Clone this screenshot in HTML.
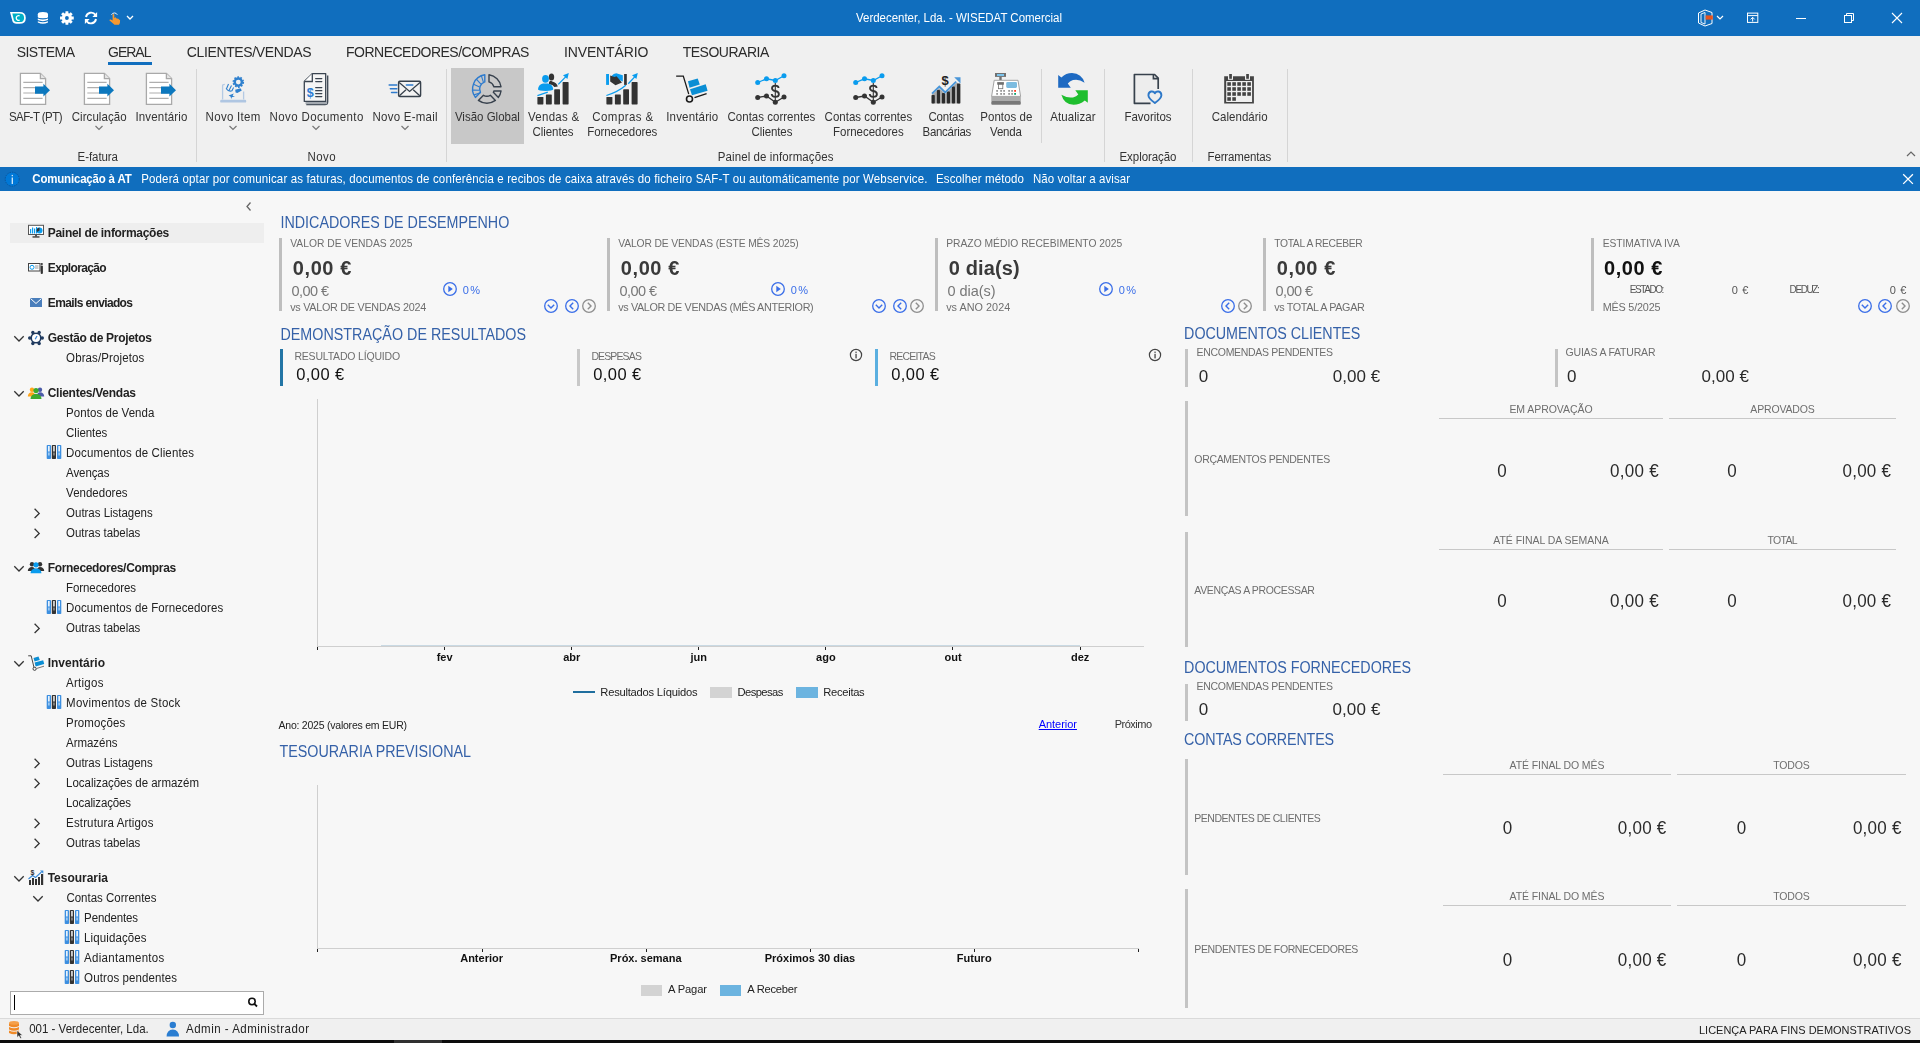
<!DOCTYPE html>
<html><head><meta charset="utf-8"><title>WISEDAT Comercial</title>
<style>
html,body{margin:0;padding:0;}
body{width:1920px;height:1043px;position:relative;overflow:hidden;background:#F7F7F7;font-family:"Liberation Sans", sans-serif;}
.t{position:absolute;white-space:pre;line-height:1;}
svg{overflow:visible}
</style></head><body>
<div style="position:absolute;left:0px;top:0px;width:1920px;height:36px;background:#106EBE;"></div><div style="position:absolute;left:0px;top:36px;width:1920px;height:131px;background:#F0F0F0;"></div><div style="position:absolute;left:0px;top:167px;width:1920px;height:24px;background:#106EBE;"></div><div style="position:absolute;left:0px;top:1018px;width:1920px;height:1px;background:#DADADA;"></div><div style="position:absolute;left:0px;top:1019px;width:1920px;height:21px;background:#F0F0F0;"></div><div style="position:absolute;left:0px;top:1040px;width:1920px;height:3px;background:#0C0C0C;"></div><div style="position:absolute;left:394px;top:1040px;width:48px;height:3px;background:#303030;"></div><div style="position:absolute;left:108px;top:62px;width:44px;height:3px;background:#106EBE;"></div><div style="position:absolute;left:196px;top:69px;width:1px;height:93px;background:#D5D5D5;"></div><div style="position:absolute;left:446px;top:69px;width:1px;height:93px;background:#D5D5D5;"></div><div style="position:absolute;left:1104px;top:69px;width:1px;height:93px;background:#D5D5D5;"></div><div style="position:absolute;left:1192px;top:69px;width:1px;height:93px;background:#D5D5D5;"></div><div style="position:absolute;left:1287px;top:69px;width:1px;height:93px;background:#D5D5D5;"></div><div style="position:absolute;left:1041px;top:69px;width:1px;height:74px;background:#D5D5D5;"></div><div style="position:absolute;left:451px;top:68px;width:73px;height:76px;background:#C8C8C8;"></div><div style="position:absolute;left:10px;top:223px;width:254px;height:20px;background:#EEEEEE;"></div><div style="position:absolute;left:10px;top:991px;width:254px;height:24px;background:#fff;box-sizing:border-box;border:1px solid #ABABAB;"></div><div style="position:absolute;left:14px;top:995px;width:1px;height:15px;background:#000;"></div><div style="position:absolute;left:279px;top:238px;width:3px;height:73px;background:#BEBEBE;"></div><div style="position:absolute;left:607px;top:238px;width:3px;height:73px;background:#BEBEBE;"></div><div style="position:absolute;left:935px;top:238px;width:3px;height:73px;background:#BEBEBE;"></div><div style="position:absolute;left:1263px;top:238px;width:3px;height:73px;background:#BEBEBE;"></div><div style="position:absolute;left:1591px;top:238px;width:3px;height:73px;background:#BEBEBE;"></div><div style="position:absolute;left:280px;top:349px;width:3px;height:37px;background:#2375A5;"></div><div style="position:absolute;left:577px;top:349px;width:3px;height:37px;background:#C8C8C8;"></div><div style="position:absolute;left:875px;top:349px;width:3px;height:37px;background:#5AAFE0;"></div><div style="position:absolute;left:317px;top:399px;width:1px;height:248px;background:#CFCFCF;"></div><div style="position:absolute;left:317px;top:646px;width:827px;height:1px;background:#CFCFCF;"></div><div style="position:absolute;left:381px;top:645px;width:699px;height:1px;background:#C9D9E3;"></div><div style="position:absolute;left:317px;top:647px;width:1px;height:3px;background:#222;"></div><div style="position:absolute;left:444px;top:647px;width:1px;height:3px;background:#222;"></div><div style="position:absolute;left:571px;top:647px;width:1px;height:3px;background:#222;"></div><div style="position:absolute;left:698px;top:647px;width:1px;height:3px;background:#222;"></div><div style="position:absolute;left:825px;top:647px;width:1px;height:3px;background:#222;"></div><div style="position:absolute;left:952px;top:647px;width:1px;height:3px;background:#222;"></div><div style="position:absolute;left:1080px;top:647px;width:1px;height:3px;background:#222;"></div><div style="position:absolute;left:573px;top:691px;width:22px;height:2px;background:#1F6E9E;"></div><div style="position:absolute;left:710px;top:687px;width:22px;height:11px;background:#D3D3D3;"></div><div style="position:absolute;left:796px;top:687px;width:22px;height:11px;background:#6CB4E0;"></div><div style="position:absolute;left:317px;top:785px;width:1px;height:164px;background:#CFCFCF;"></div><div style="position:absolute;left:317px;top:948px;width:822px;height:1px;background:#CFCFCF;"></div><div style="position:absolute;left:317px;top:949px;width:1px;height:3px;background:#222;"></div><div style="position:absolute;left:482px;top:949px;width:1px;height:3px;background:#222;"></div><div style="position:absolute;left:646px;top:949px;width:1px;height:3px;background:#222;"></div><div style="position:absolute;left:810px;top:949px;width:1px;height:3px;background:#222;"></div><div style="position:absolute;left:974px;top:949px;width:1px;height:3px;background:#222;"></div><div style="position:absolute;left:1138px;top:949px;width:1px;height:3px;background:#222;"></div><div style="position:absolute;left:641px;top:985px;width:21px;height:11px;background:#D3D3D3;"></div><div style="position:absolute;left:720px;top:985px;width:21px;height:11px;background:#6CB4E0;"></div><div style="position:absolute;left:1185px;top:349px;width:3px;height:38px;background:#C4C4C4;"></div><div style="position:absolute;left:1555px;top:349px;width:3px;height:38px;background:#C4C4C4;"></div><div style="position:absolute;left:1185px;top:401px;width:3px;height:115px;background:#C4C4C4;"></div><div style="position:absolute;left:1439px;top:418px;width:224px;height:1px;background:#C8C8C8;"></div><div style="position:absolute;left:1669px;top:418px;width:227px;height:1px;background:#C8C8C8;"></div><div style="position:absolute;left:1185px;top:532px;width:3px;height:115px;background:#C4C4C4;"></div><div style="position:absolute;left:1439px;top:549px;width:224px;height:1px;background:#C8C8C8;"></div><div style="position:absolute;left:1669px;top:549px;width:227px;height:1px;background:#C8C8C8;"></div><div style="position:absolute;left:1185px;top:684px;width:3px;height:37px;background:#C4C4C4;"></div><div style="position:absolute;left:1185px;top:759px;width:3px;height:116px;background:#C4C4C4;"></div><div style="position:absolute;left:1443px;top:774px;width:228px;height:1px;background:#C8C8C8;"></div><div style="position:absolute;left:1677px;top:774px;width:229px;height:1px;background:#C8C8C8;"></div><div style="position:absolute;left:1185px;top:889px;width:3px;height:119px;background:#C4C4C4;"></div><div style="position:absolute;left:1443px;top:905px;width:228px;height:1px;background:#C8C8C8;"></div><div style="position:absolute;left:1677px;top:905px;width:229px;height:1px;background:#C8C8C8;"></div>
<svg style="position:absolute;left:94px;top:124px" width="10" height="8" viewBox="0 0 10 8"><path d="M1.5,2 L5,5.5 L8.5,2" stroke="#777" stroke-width="1.2" fill="none"/></svg><svg style="position:absolute;left:228px;top:124px" width="10" height="8" viewBox="0 0 10 8"><path d="M1.5,2 L5,5.5 L8.5,2" stroke="#777" stroke-width="1.2" fill="none"/></svg><svg style="position:absolute;left:311px;top:124px" width="10" height="8" viewBox="0 0 10 8"><path d="M1.5,2 L5,5.5 L8.5,2" stroke="#777" stroke-width="1.2" fill="none"/></svg><svg style="position:absolute;left:400px;top:124px" width="10" height="8" viewBox="0 0 10 8"><path d="M1.5,2 L5,5.5 L8.5,2" stroke="#777" stroke-width="1.2" fill="none"/></svg><svg style="position:absolute;left:0px;top:0px" width="140" height="36" viewBox="0 0 140 36">
<path d="M10,12 H19.5 Q25.8,12 25.8,17.9 Q25.8,23.8 19.5,23.8 H16.5 Q13.2,23.8 12.4,21 Z" fill="#fff"/>
<path d="M12.3,13.6 H19.5 Q24.1,13.6 24.1,17.9 Q24.1,22.1 19.5,22.1 H16.6 Q14.4,22.1 13.9,20.3 Z" fill="#00AFC6"/>
<path d="M19.6,15.8 A2.4,2.4 0 1 0 19.6,20.2" stroke="#fff" stroke-width="1.3" fill="none"/>
<ellipse cx="42.9" cy="14.4" rx="5.1" ry="2.4" fill="#fff"/>
<rect x="37.8" y="14.4" width="10.2" height="2.6" fill="#fff"/>
<ellipse cx="42.9" cy="17" rx="5.1" ry="1.2" fill="#fff"/>
<path d="M37.8,18.5 Q42.9,20.6 48,18.5 V20.1 Q42.9,22.3 37.8,20.1 Z" fill="#fff"/>
<path d="M37.8,21.3 Q42.9,23.4 48,21.3 V22.6 Q42.9,25.1 37.8,22.6 Z" fill="#fff"/>
<path d="M71.77,16.49 L73.76,16.61 L73.76,19.39 L71.77,19.51 L71.41,20.38 L72.73,21.87 L70.77,23.83 L69.28,22.51 L68.41,22.87 L68.29,24.86 L65.51,24.86 L65.39,22.87 L64.52,22.51 L63.03,23.83 L61.07,21.87 L62.39,20.38 L62.03,19.51 L60.04,19.39 L60.04,16.61 L62.03,16.49 L62.39,15.62 L61.07,14.13 L63.03,12.17 L64.52,13.49 L65.39,13.13 L65.51,11.14 L68.29,11.14 L68.41,13.13 L69.28,13.49 L70.77,12.17 L72.73,14.13 L71.41,15.62 Z" fill="#fff"/><circle cx="66.9" cy="18" r="1.9" fill="#106EBE"/>
<path d="M86,17 A5.2,5.2 0 0 1 95.5,15" stroke="#fff" stroke-width="1.9" fill="none"/>
<path d="M97.1,12 V17 H92.4 Z" fill="#fff"/>
<path d="M96,19 A5.2,5.2 0 0 1 86.5,21" stroke="#fff" stroke-width="1.9" fill="none"/>
<path d="M84.9,24 V19 H89.6 Z" fill="#fff"/>
<path d="M111.5,14.8 A3.2,3.2 0 0 1 117.3,14.8" stroke="#fff" stroke-width="0.9" fill="none"/>
<path d="M112.6,14.6 Q113.4,13.4 114.3,14.6 V18 L115.2,17.4 Q116,17.2 116.1,18 V18.4 Q117,17.8 117.6,18.6 V19 Q118.6,18.6 119,19.4 L120.1,20.2 Q120.3,23 119,24.8 H114.5 L109.3,20.2 Q109.6,19.2 110.8,19.6 L112.6,20.6 Z" fill="#F7982F"/>
<path d="M127,16 L130,19 L133,16" stroke="#fff" stroke-width="1.3" fill="none"/>
</svg><svg style="position:absolute;left:0px;top:0px" width="1920" height="36" viewBox="0 0 1920 36">
<path d="M1698.5,13 L1705,10 L1712,12.5 V23.5 L1705,26 L1698.5,23 Z" fill="none" stroke="#fff" stroke-width="1"/>
<path d="M1701,14 L1705,12.5 V24 L1701,22.5 Z" fill="none" stroke="#fff" stroke-width="0.9"/>
<rect x="1705.6" y="15.4" width="7.2" height="4.2" fill="#E8541E"/>
<path d="M1717,16 L1720,19 L1723,16" stroke="#fff" stroke-width="1.2" fill="none"/>
<rect x="1747.5" y="13.1" width="10.3" height="9.3" fill="none" stroke="#fff" stroke-width="1"/>
<path d="M1747.5,15.6 H1757.8 M1752.65,21.5 V17.3 M1750.6,19.4 L1752.65,17.3 L1754.7,19.4" stroke="#fff" stroke-width="1" fill="none"/>
<path d="M1796,18.5 H1806" stroke="#fff" stroke-width="1"/>
<rect x="1844.5" y="15.5" width="7" height="7" fill="none" stroke="#fff" stroke-width="1"/>
<path d="M1846.5,15.5 V13.5 H1853.5 V20.5 H1851.5" stroke="#fff" stroke-width="1" fill="none"/>
<path d="M1892,13 L1902,23 M1902,13 L1892,23" stroke="#fff" stroke-width="1.1"/>
</svg><svg style="position:absolute;left:14px;top:68px" width="42" height="42" viewBox="0 0 42 42">
<path d="M6.4,5.4 H26.4 L31.6,10.6 V36.4 H6.4 Z" fill="#fff" stroke="#A9A9A9" stroke-width="1.3"/>
<path d="M26.4,5.4 V10.6 H31.6" fill="#E6E6E6" stroke="#A9A9A9" stroke-width="1.3"/>
<path d="M9.3,14.3 H28.6 M9.3,19.6 H28.6 M9.3,25 H28.6 M9.3,30.3 H28.6" stroke="#AEAEAE" stroke-width="1.2"/>
<path d="M21,18.6 H29.4 V15.8 L36,22.2 L29.4,28.6 V25.8 H21 Z" fill="#0C78BE"/></svg><svg style="position:absolute;left:77.8px;top:68px" width="42" height="42" viewBox="0 0 42 42">
<path d="M6.4,5.4 H26.4 L31.6,10.6 V36.4 H6.4 Z" fill="#fff" stroke="#A9A9A9" stroke-width="1.3"/>
<path d="M26.4,5.4 V10.6 H31.6" fill="#E6E6E6" stroke="#A9A9A9" stroke-width="1.3"/>
<path d="M9.3,14.3 H28.6 M9.3,19.6 H28.6 M9.3,25 H28.6 M9.3,30.3 H28.6" stroke="#AEAEAE" stroke-width="1.2"/>
<path d="M21,18.6 H29.4 V15.8 L36,22.2 L29.4,28.6 V25.8 H21 Z" fill="#0C78BE"/></svg><svg style="position:absolute;left:139.7px;top:68px" width="42" height="42" viewBox="0 0 42 42">
<path d="M6.4,5.4 H26.4 L31.6,10.6 V36.4 H6.4 Z" fill="#fff" stroke="#A9A9A9" stroke-width="1.3"/>
<path d="M26.4,5.4 V10.6 H31.6" fill="#E6E6E6" stroke="#A9A9A9" stroke-width="1.3"/>
<path d="M9.3,14.3 H28.6 M9.3,19.6 H28.6 M9.3,25 H28.6 M9.3,30.3 H28.6" stroke="#AEAEAE" stroke-width="1.2"/>
<path d="M21,18.6 H29.4 V15.8 L36,22.2 L29.4,28.6 V25.8 H21 Z" fill="#0C78BE"/></svg><svg style="position:absolute;left:214px;top:68px" width="42" height="42" viewBox="0 0 42 42">
<path d="M8.6,31.5 V17.6 Q8.6,16.4 10.8,16.4" stroke="#B4CAE4" stroke-width="1.3" fill="none"/>
<path d="M29.6,23.5 V31.5" stroke="#B4CAE4" stroke-width="1.3"/>
<rect x="6.2" y="31.8" width="26" height="2.8" rx="1.2" fill="#AFC6E2"/>
<circle cx="24.3" cy="14.1" r="3.6" fill="none" stroke="#2F80CE" stroke-width="2.4"/>
<circle cx="24.3" cy="14.1" r="5" fill="none" stroke="#2F80CE" stroke-width="1.6" stroke-dasharray="1.6 1.54"/>
<path d="M21.2,21.8 L26.5,20.2 L27.8,22.4 L23.3,25 L21.6,24.6 Z" fill="#2F80CE"/>
<path d="M12.3,21.3 L14.5,16 M15,22.5 L17.5,17.5 M17.8,23 L19.6,19.5 M12,20.5 Q15,24.5 18.5,22.5" stroke="#2F80CE" stroke-width="1.1" fill="none"/>
<path d="M14.6,27.6 L19.8,25.5 L18.6,27.8 L21,28.5 L17.8,29.2 L17.3,31 L16.5,28.6 Z" fill="#2F80CE"/></svg><svg style="position:absolute;left:296px;top:68px" width="42" height="42" viewBox="0 0 42 42">
<path d="M31.7,7.6 V33.8 Q31.7,36.7 29,36.7 H10.3" fill="none" stroke="#3A4450" stroke-width="1.3"/>
<rect x="9.5" y="33.6" width="21.6" height="2.6" fill="#A3A9B0"/>
<path d="M16.3,5.6 H29.7 V33.4 H8.3 V13.5 Z" fill="#F5F5F5" stroke="#3A4450" stroke-width="1.3" stroke-linejoin="round"/>
<path d="M16.3,5.6 V13.5 H8.3" fill="#fff" stroke="#3A4450" stroke-width="1.3"/>
<path d="M19.7,10.6 H25.8 M19.7,13.6 H25.8 M19.7,19.6 H25.8 M19.7,22.7 H25.8 M19.7,25.6 H25.8 M19.7,28.6 H25.8" stroke="#3A4450" stroke-width="1.3" stroke-linecap="round"/>
<text x="14.2" y="28.6" font-family="Liberation Sans" font-weight="bold" font-size="12.5" fill="#2B7CD3" text-anchor="middle">$</text></svg><svg style="position:absolute;left:384px;top:68px" width="42" height="42" viewBox="0 0 42 42">
<rect x="14.6" y="13.2" width="22" height="15.3" rx="1.2" fill="#F3F3F3" stroke="#37414C" stroke-width="1.4"/>
<path d="M15.2,14.6 L25.6,23.4 L36,14.6 M15.4,27.8 L22,21.8 M35.8,27.8 L29.2,21.8" stroke="#37414C" stroke-width="1.3" fill="none"/>
<path d="M5.2,17 H12.8 M6.4,20.8 H12.8 M7.6,24.5 H12.8 M22.4,17 H28.8" stroke="#2E7BCD" stroke-width="1.6" stroke-linecap="round"/></svg><svg style="position:absolute;left:466px;top:68px" width="42" height="42" viewBox="0 0 42 42">
<path d="M35.04,18.80 A14.3,14.3 0 0 0 23.00,6.76 L23.00,13.91 A7.3,7.3 0 0 1 27.89,18.80 Z" fill="none" stroke="#37414D" stroke-width="1.4" stroke-linejoin="round"/>
<path d="M32.39,29.42 A14.3,14.3 0 0 0 35.04,23.00 L27.89,23.00 A7.3,7.3 0 0 1 27.33,24.36 Z" fill="none" stroke="#37414D" stroke-width="1.4" stroke-linejoin="round"/>
<path d="M12.38,32.39 A14.3,14.3 0 0 0 29.42,32.39 L24.36,27.33 A7.3,7.3 0 0 1 17.44,27.33 Z" fill="none" stroke="#37414D" stroke-width="1.4" stroke-linejoin="round"/>
<path d="M18.80,6.76 A14.3,14.3 0 0 0 9.41,29.42 L14.47,24.36 A7.3,7.3 0 0 1 18.80,13.91 Z" fill="none" stroke="#2E7BCD" stroke-width="1.4" stroke-linejoin="round"/>
<path d="M17.33,14.19 L15.39,7.92" stroke="#2E7BCD" stroke-width="1.1"/><path d="M14.91,16.22 L10.59,11.28" stroke="#2E7BCD" stroke-width="1.1"/><path d="M13.53,19.06 L7.57,16.31" stroke="#2E7BCD" stroke-width="1.1"/><path d="M13.42,22.22 L6.85,22.13" stroke="#2E7BCD" stroke-width="1.1"/><path d="M14.32,24.70 L8.12,26.86" stroke="#2E7BCD" stroke-width="1.1"/></svg><svg style="position:absolute;left:532px;top:68px" width="42" height="42" viewBox="0 0 42 42"><rect x="5.4" y="29" width="6" height="7.4" rx="0.6" fill="#333"/>
<rect x="13.9" y="26.4" width="5.9" height="10" rx="0.6" fill="#333"/>
<rect x="22.2" y="21.3" width="5.8" height="15.1" rx="0.6" fill="#333"/>
<rect x="30.6" y="14.1" width="6" height="22.3" rx="0.6" fill="#333"/>
<ellipse cx="19.5" cy="9" rx="2.7" ry="3.6" fill="#333"/>
<path d="M17,14.2 Q18.5,12 20.2,13.4 Q24.8,14.5 25.8,18.4 L22.4,19 Q21,16.6 17,16.3 Z" fill="#333"/>
<ellipse cx="13.5" cy="10.8" rx="3.4" ry="3.9" fill="#0A9CEE"/>
<path d="M6,21.6 Q6.3,16.8 11,15.6 H16 Q20.9,16.8 21.2,21.6 Q20.5,22.9 13.6,23 Q6.5,22.9 6,21.6 Z" fill="#0A9CEE"/>
<path d="M5.4,27.6 L15.8,24.2 M26.3,16.4 L34.4,8.1" stroke="#0A9CEE" stroke-width="1.3"/>
<path d="M31,7.3 L36.8,5 L35.4,11 Z" fill="#0A9CEE"/></svg><svg style="position:absolute;left:601px;top:68px" width="42" height="42" viewBox="0 0 42 42"><rect x="5.4" y="29" width="6" height="7.4" rx="0.6" fill="#333"/>
<rect x="13.9" y="26.4" width="5.9" height="10" rx="0.6" fill="#333"/>
<rect x="22.2" y="21.3" width="5.8" height="15.1" rx="0.6" fill="#333"/>
<rect x="30.6" y="14.1" width="6" height="22.3" rx="0.6" fill="#333"/>
<rect x="5.1" y="6" width="2.9" height="10.9" fill="#0A9CEE"/>
<rect x="23.1" y="6" width="2.7" height="10.9" fill="#333"/>
<path d="M10.2,8.2 Q13,5 16,5.4 L21.8,7.2 V13.6 Z" fill="#0A9CEE"/>
<path d="M9.2,7.5 L13.5,9 L15.5,8.3 L21,14.5 L14.5,17.3 L9.2,13.6 Z" fill="#333"/>
<path d="M5.4,27.5 Q17,24 24.8,17.3 M27.3,15.7 L34.4,8.1" stroke="#0A9CEE" stroke-width="1.3" fill="none"/>
<path d="M31,7.3 L36.8,5 L35.4,11 Z" fill="#0A9CEE"/></svg><svg style="position:absolute;left:671px;top:68px" width="42" height="42" viewBox="0 0 42 42">
<path d="M5.6,8.1 H12.3 L17.6,25.6" stroke="#1a1a1a" stroke-width="1.3" fill="none" stroke-linecap="round"/>
<circle cx="18.5" cy="31" r="3" fill="none" stroke="#1a1a1a" stroke-width="1.6"/>
<path d="M23.5,29.6 L35.6,25.6" stroke="#1a1a1a" stroke-width="1.5"/>
<path d="M17,13.3 L26.7,10.6 L28.8,16.6 L18.5,19.8 Z" fill="#0A8ED4"/>
<path d="M19,21.3 L34.7,16.2 L36.6,22.7 L21,27.2 Z" fill="#0A8ED4"/></svg><svg style="position:absolute;left:750px;top:68px" width="42" height="42" viewBox="0 0 42 42">
<path d="M7.7,14.5 L16.5,10.8 L25.3,12.5 L34,7.7" stroke="#0A9CEE" stroke-width="1.3" fill="none"/>
<circle cx="7.7" cy="14.5" r="2.5" fill="#0A9CEE"/><circle cx="16.5" cy="10.8" r="2.5" fill="#0A9CEE"/>
<circle cx="25.3" cy="12.5" r="2.5" fill="#0A9CEE"/><circle cx="34" cy="7.7" r="2.5" fill="#0A9CEE"/>
<path d="M7.7,29.5 L16.5,28 L25.3,34.3 L34,29" stroke="#333" stroke-width="1.3" fill="none"/>
<circle cx="7.7" cy="29.5" r="2.5" fill="#333"/><circle cx="16.5" cy="28" r="2.5" fill="#333"/>
<circle cx="25.3" cy="34.3" r="2.5" fill="#333"/><circle cx="34" cy="29" r="2.5" fill="#333"/>
<path d="M25.3,15 V32" stroke="#333" stroke-width="1.1"/>
<path d="M28.6,20 Q28.4,17.6 25.3,17.6 Q22,17.6 22,20.2 Q22,22.3 25.3,23 Q28.9,23.7 28.9,26.2 Q28.9,28.8 25.3,28.8 Q21.8,28.8 21.7,26" stroke="#333" stroke-width="1.8" fill="none"/></svg><svg style="position:absolute;left:847.5px;top:68px" width="42" height="42" viewBox="0 0 42 42">
<path d="M7.7,14.5 L16.5,10.8 L25.3,12.5 L34,7.7" stroke="#0A9CEE" stroke-width="1.3" fill="none"/>
<circle cx="7.7" cy="14.5" r="2.5" fill="#0A9CEE"/><circle cx="16.5" cy="10.8" r="2.5" fill="#0A9CEE"/>
<circle cx="25.3" cy="12.5" r="2.5" fill="#0A9CEE"/><circle cx="34" cy="7.7" r="2.5" fill="#0A9CEE"/>
<path d="M7.7,29.5 L16.5,28 L25.3,34.3 L34,29" stroke="#333" stroke-width="1.3" fill="none"/>
<circle cx="7.7" cy="29.5" r="2.5" fill="#333"/><circle cx="16.5" cy="28" r="2.5" fill="#333"/>
<circle cx="25.3" cy="34.3" r="2.5" fill="#333"/><circle cx="34" cy="29" r="2.5" fill="#333"/>
<path d="M25.3,15 V32" stroke="#333" stroke-width="1.1"/>
<path d="M28.6,20 Q28.4,17.6 25.3,17.6 Q22,17.6 22,20.2 Q22,22.3 25.3,23 Q28.9,23.7 28.9,26.2 Q28.9,28.8 25.3,28.8 Q21.8,28.8 21.7,26" stroke="#333" stroke-width="1.8" fill="none"/></svg><svg style="position:absolute;left:925px;top:68px" width="42" height="42" viewBox="0 0 42 42">
<path d="M6.5,27 L14.3,20.2 L20.2,26 L32,14.6 L35.3,17.5 V35.6 H6.5 Z" fill="#A8A8A8"/>
<rect x="6.6" y="27" width="3.2" height="8.6" rx="0.8" fill="#2b2b2b"/>
<rect x="11.9" y="22" width="3.1" height="13.6" rx="0.8" fill="#2b2b2b"/>
<rect x="16.9" y="25" width="3.1" height="10.6" rx="0.8" fill="#2b2b2b"/>
<rect x="21.9" y="23.5" width="3.1" height="12.1" rx="0.8" fill="#2b2b2b"/>
<rect x="26.9" y="18.5" width="3.1" height="17.1" rx="0.8" fill="#2b2b2b"/>
<rect x="32" y="15.5" width="3.3" height="20.1" rx="0.8" fill="#2b2b2b"/>
<path d="M7,25.6 L14.3,18.6 L20.2,24.4 L31.2,13.6" stroke="#4A96D8" stroke-width="1.9" fill="none"/>
<path d="M29.2,9.3 H35.5 V15.6 Z" fill="#4A96D8"/>
<text x="20.1" y="17.2" font-family="Liberation Sans" font-weight="bold" font-size="13" fill="#222" text-anchor="middle">$</text></svg><svg style="position:absolute;left:985px;top:68px" width="42" height="42" viewBox="0 0 42 42">
<rect x="10" y="5" width="11" height="3.9" fill="#707070"/>
<rect x="12" y="6" width="7" height="2" fill="#7CC4EC"/>
<rect x="14.3" y="8.8" width="2.4" height="3.4" fill="#707070"/>
<path d="M9.2,12.3 H33 L35.6,28.4 H6.6 Z" fill="#fff" stroke="#9A9A9A" stroke-width="0.9"/>
<rect x="6.3" y="28.2" width="29.5" height="4.9" fill="#ABABAB"/>
<rect x="6.3" y="33" width="29.5" height="3.8" rx="1" fill="#787878"/>
<rect x="12.2" y="14.1" width="6.7" height="2.6" fill="#707070"/>
<rect x="13.4" y="16.3" width="4.4" height="4.4" fill="#fff" stroke="#707070" stroke-width="0.8"/>
<rect x="21.2" y="14.1" width="10.8" height="5.8" rx="1.3" fill="#7DBCE0"/>
<g fill="#9A9A9A">
<rect x="11.2" y="22" width="1.8" height="1.8"/><rect x="15.2" y="22" width="1.8" height="1.8"/><rect x="18.2" y="22" width="1.8" height="1.8"/>
<rect x="23.2" y="22" width="1.8" height="1.8"/><rect x="26.2" y="22" width="1.8" height="1.8"/>
<rect x="11.2" y="25" width="1.8" height="1.8"/><rect x="15.2" y="25" width="1.8" height="1.8"/><rect x="18.2" y="25" width="1.8" height="1.8"/>
<rect x="23.2" y="25" width="1.8" height="1.8"/><rect x="26.2" y="25" width="1.8" height="1.8"/></g>
<rect x="29.2" y="22" width="1.8" height="1.8" fill="#FF3B1F"/><rect x="29.2" y="25" width="1.8" height="1.8" fill="#0AA06E"/></svg><svg style="position:absolute;left:1052px;top:68px" width="42" height="42" viewBox="0 0 42 42">
<path d="M6.2,7 L9.4,9.4 Q14,5 20,5 Q29.8,5.5 32.6,14.8 Q26.5,10.4 21,12.1 Q17.6,13.2 15.8,15.4 L18.8,19.7 H6.2 Z" fill="#1E6AC2"/>
<path d="M23.3,22.2 H35.8 V34.8 L32.8,32.4 Q27.5,36.8 21.5,36.8 Q12,36.5 9.4,26.8 Q15.5,30.4 21,29.4 Q24.5,28.6 26.3,26.6 Z" fill="#1EBE2E"/></svg><svg style="position:absolute;left:1127px;top:68px" width="42" height="42" viewBox="0 0 42 42">
<path d="M23.5,35.3 H7.4 V6.5 H27.6 L31.2,10.1 V21" fill="#EDEDED" stroke="#37414C" stroke-width="1.7" stroke-linejoin="round"/>
<path d="M26.4,6.5 V10.6 H31" fill="none" stroke="#37414C" stroke-width="1.6"/>
<path d="M27.9,25.2 C26.4,22.6 21.6,22.6 21.4,27.3 C21.5,30.2 25,33 27.9,35 C30.8,33 34.3,30.2 34.4,27.3 C34.2,22.6 29.4,22.6 27.9,25.2 Z" fill="#EDEDED" stroke="#2D78C8" stroke-width="1.9" stroke-linejoin="round"/></svg><svg style="position:absolute;left:1218px;top:68px" width="42" height="42" viewBox="0 0 42 42"><path d="M6.2,8.3 H35.9 V35.6 H6.2 Z M8.2,13 V34.1 H34.1 V13 Z" fill="#444" fill-rule="evenodd"/>
<rect x="10" y="4.8" width="5" height="7" fill="#F0F0F0"/><rect x="27" y="4.8" width="5" height="7" fill="#F0F0F0"/>
<rect x="11.2" y="6" width="2.7" height="4.8" fill="#444"/><rect x="28.2" y="6" width="2.7" height="4.8" fill="#444"/><rect x="9.3" y="14.2" width="3.6" height="3.6" fill="#444"/><rect x="14.3" y="14.2" width="3.6" height="3.6" fill="#444"/><rect x="19.3" y="14.2" width="3.6" height="3.6" fill="#444"/><rect x="24.3" y="14.2" width="3.6" height="3.6" fill="#444"/><rect x="29.3" y="14.2" width="3.6" height="3.6" fill="#444"/><rect x="9.3" y="19.2" width="3.6" height="3.6" fill="#444"/><rect x="14.3" y="19.2" width="3.6" height="3.6" fill="#444"/><rect x="19.3" y="19.2" width="3.6" height="3.6" fill="#444"/><rect x="24.3" y="19.2" width="3.6" height="3.6" fill="#444"/><rect x="29.3" y="19.2" width="3.6" height="3.6" fill="#444"/><rect x="9.3" y="24.2" width="3.6" height="3.6" fill="#444"/><rect x="14.3" y="24.2" width="3.6" height="3.6" fill="#444"/><rect x="19.3" y="24.2" width="3.6" height="3.6" fill="#444"/><rect x="24.3" y="24.2" width="3.6" height="3.6" fill="#444"/><rect x="29.3" y="24.2" width="3.6" height="3.6" fill="#444"/><rect x="9.3" y="29.2" width="3.6" height="3.6" fill="#444"/><rect x="14.3" y="29.2" width="3.6" height="3.6" fill="#444"/></svg><svg style="position:absolute;left:1900px;top:145px" width="20" height="16" viewBox="0 0 20 16"><path d="M7,11 L11,7 L15,11" stroke="#666" stroke-width="1.2" fill="none"/></svg><svg style="position:absolute;left:0px;top:167px" width="40" height="24" viewBox="0 0 40 24"><circle cx="12.2" cy="12.2" r="7" fill="#0078D7" stroke="#0A4F93" stroke-width="0.8" stroke-dasharray="1.5 1"/>
<rect x="11.7" y="7.9" width="1.1" height="1.3" fill="#fff"/><rect x="11.7" y="10.5" width="1.1" height="6.5" fill="#fff"/></svg><svg style="position:absolute;left:1896px;top:167px" width="24" height="24" viewBox="0 0 24 24"><path d="M7.2,7.2 L16.9,16.9 M16.9,7.2 L7.2,16.9" stroke="#fff" stroke-width="1.3"/></svg><svg style="position:absolute;left:240px;top:196px" width="20" height="20" viewBox="0 0 20 20"><path d="M10.5,6.5 L7,10.5 L10.5,14.5" stroke="#666" stroke-width="1.3" fill="none"/></svg><svg style="position:absolute;left:13px;top:333px" width="12" height="10" viewBox="0 0 12 10"><path d="M1.3,3.3 L6,8 L10.7,3.3" stroke="#333" stroke-width="1.3" fill="none"/></svg><svg style="position:absolute;left:13px;top:388px" width="12" height="10" viewBox="0 0 12 10"><path d="M1.3,3.3 L6,8 L10.7,3.3" stroke="#333" stroke-width="1.3" fill="none"/></svg><svg style="position:absolute;left:13px;top:563px" width="12" height="10" viewBox="0 0 12 10"><path d="M1.3,3.3 L6,8 L10.7,3.3" stroke="#333" stroke-width="1.3" fill="none"/></svg><svg style="position:absolute;left:13px;top:658px" width="12" height="10" viewBox="0 0 12 10"><path d="M1.3,3.3 L6,8 L10.7,3.3" stroke="#333" stroke-width="1.3" fill="none"/></svg><svg style="position:absolute;left:13px;top:873px" width="12" height="10" viewBox="0 0 12 10"><path d="M1.3,3.3 L6,8 L10.7,3.3" stroke="#333" stroke-width="1.3" fill="none"/></svg><svg style="position:absolute;left:31.5px;top:893px" width="12" height="10" viewBox="0 0 12 10"><path d="M1.3,3.3 L6,8 L10.7,3.3" stroke="#333" stroke-width="1.3" fill="none"/></svg><svg style="position:absolute;left:32px;top:506px" width="10" height="14" viewBox="0 0 10 14"><path d="M2.6,2.8 L7.2,7.4 L2.6,12" stroke="#333" stroke-width="1.3" fill="none"/></svg><svg style="position:absolute;left:32px;top:526px" width="10" height="14" viewBox="0 0 10 14"><path d="M2.6,2.8 L7.2,7.4 L2.6,12" stroke="#333" stroke-width="1.3" fill="none"/></svg><svg style="position:absolute;left:32px;top:621px" width="10" height="14" viewBox="0 0 10 14"><path d="M2.6,2.8 L7.2,7.4 L2.6,12" stroke="#333" stroke-width="1.3" fill="none"/></svg><svg style="position:absolute;left:32px;top:756px" width="10" height="14" viewBox="0 0 10 14"><path d="M2.6,2.8 L7.2,7.4 L2.6,12" stroke="#333" stroke-width="1.3" fill="none"/></svg><svg style="position:absolute;left:32px;top:776px" width="10" height="14" viewBox="0 0 10 14"><path d="M2.6,2.8 L7.2,7.4 L2.6,12" stroke="#333" stroke-width="1.3" fill="none"/></svg><svg style="position:absolute;left:32px;top:816px" width="10" height="14" viewBox="0 0 10 14"><path d="M2.6,2.8 L7.2,7.4 L2.6,12" stroke="#333" stroke-width="1.3" fill="none"/></svg><svg style="position:absolute;left:32px;top:836px" width="10" height="14" viewBox="0 0 10 14"><path d="M2.6,2.8 L7.2,7.4 L2.6,12" stroke="#333" stroke-width="1.3" fill="none"/></svg><svg style="position:absolute;left:27px;top:224px" width="18" height="16" viewBox="0 0 18 16"><rect x="1.5" y="1.3" width="15" height="9.2" fill="#fff" stroke="#555" stroke-width="1"/>
<rect x="3" y="5" width="1.2" height="4.5" fill="#0A9CEE"/><rect x="5" y="3.5" width="1.2" height="6" fill="#0A9CEE"/><rect x="7" y="4.5" width="1.2" height="5" fill="#0A9CEE"/><rect x="9" y="3" width="1.2" height="6.5" fill="#0A9CEE"/>
<circle cx="12.5" cy="6.5" r="3" fill="#0A9CEE"/><path d="M12.5,6.5 V3.5 A3,3 0 0 0 10,8 Z" fill="#333"/>
<rect x="8" y="10.5" width="2" height="2" fill="#555"/><rect x="5.5" y="12.3" width="7" height="1.3" fill="#333"/></svg><svg style="position:absolute;left:27px;top:261px" width="18" height="14" viewBox="0 0 18 14"><rect x="1.5" y="2.5" width="11.5" height="7.5" fill="#fff" stroke="#444" stroke-width="1"/>
<circle cx="5" cy="6.3" r="2" fill="none" stroke="#0A9CEE" stroke-width="1"/><path d="M8,5 H11.5 M8,7 H11.5" stroke="#999" stroke-width="1"/>
<rect x="13.7" y="4.5" width="2.2" height="8.5" rx="1" fill="#333"/><circle cx="14.8" cy="3" r="1.1" fill="#333"/></svg><svg style="position:absolute;left:29px;top:297px" width="14" height="11" viewBox="0 0 14 11"><rect x="1" y="1" width="12" height="9" fill="#4A7EBB"/><path d="M1.5,1.5 L7,6.5 L12.5,1.5" stroke="#fff" stroke-width="1" fill="none"/></svg><svg style="position:absolute;left:27px;top:330px" width="18" height="16" viewBox="0 0 18 16"><circle cx="9" cy="8" r="5.6" fill="#1F3A5F"/><circle cx="15.30" cy="8.00" r="1.7" fill="#1F3A5F"/><circle cx="12.15" cy="13.46" r="1.7" fill="#1F3A5F"/><circle cx="5.85" cy="13.46" r="1.7" fill="#1F3A5F"/><circle cx="2.70" cy="8.00" r="1.7" fill="#1F3A5F"/><circle cx="5.85" cy="2.54" r="1.7" fill="#1F3A5F"/><circle cx="12.15" cy="2.54" r="1.7" fill="#1F3A5F"/><circle cx="9" cy="8" r="4" fill="#fff"/><path d="M8.2,9.2 L10,6" stroke="#3A86D6" stroke-width="1.3"/></svg><svg style="position:absolute;left:27px;top:386px" width="18" height="14" viewBox="0 0 18 14"><circle cx="5" cy="3.7" r="2.2" fill="#FFA619"/><path d="M0.8,10.5 Q1,6.5 5,6.3 Q8,6.5 8.5,10.5 Z" fill="#FFA619"/>
<circle cx="13" cy="3.7" r="2.2" fill="#4B5BA8"/><path d="M9.5,10.5 Q10,6.5 13,6.3 Q17,6.5 17.2,10.5 Z" fill="#4B5BA8"/>
<circle cx="9" cy="4.5" r="2.6" fill="#3BAA2F"/><path d="M3.5,13 Q3.8,8 9,7.8 Q14.2,8 14.5,13 Z" fill="#3BAA2F"/></svg><svg style="position:absolute;left:27px;top:561px" width="18" height="14" viewBox="0 0 18 14"><circle cx="5" cy="3.3" r="2.2" fill="#333"/><path d="M0.8,10 Q1,6.3 5,6 Q8,6.3 8.5,10 Z" fill="#333"/>
<circle cx="13" cy="3.3" r="2.2" fill="#333"/><path d="M9.5,10 Q10,6.3 13,6 Q17,6.3 17.2,10 Z" fill="#333"/>
<circle cx="9" cy="3.8" r="2.6" fill="#0A9CEE"/><path d="M3.5,12.3 Q3.8,7.5 9,7.2 Q14.2,7.5 14.5,12.3 Z" fill="#0A9CEE"/></svg><svg style="position:absolute;left:27px;top:654px" width="18" height="18" viewBox="0 0 18 18"><path d="M1.2,1.8 H4.2 L7,13.5" stroke="#333" stroke-width="0.9" fill="none"/>
<circle cx="7.6" cy="14.8" r="1.6" fill="none" stroke="#333" stroke-width="0.9"/>
<path d="M9.5,14.5 L17,12.2" stroke="#666" stroke-width="0.9"/>
<path d="M6.5,4 L11.5,2.5 L12.8,6 L7.5,7.5 Z" fill="#0A8ED4"/><path d="M7.6,8.6 L16.2,6.2 L17.2,10 L8.6,12.4 Z" fill="#0A8ED4"/></svg><svg style="position:absolute;left:27px;top:869px" width="18" height="17" viewBox="0 0 18 17"><rect x="2" y="11" width="2" height="5" fill="#333"/><rect x="5" y="9" width="2" height="7" fill="#333"/><rect x="8" y="10" width="2" height="6" fill="#333"/>
<rect x="11" y="8" width="2" height="8" fill="#333"/><rect x="14" y="5" width="2.2" height="11" fill="#333"/>
<path d="M1.5,10 L5.5,6.5 L8.5,8.5 L14.5,3" stroke="#3A8BD8" stroke-width="1.1" fill="none"/><path d="M13,1.5 H16.3 V4.8 Z" fill="#3A8BD8"/>
<text x="5.5" y="6" font-family="Liberation Sans" font-weight="bold" font-size="7" fill="#333" text-anchor="middle">$</text></svg><svg style="position:absolute;left:46px;top:444px" width="16" height="16" viewBox="0 0 16 16"><rect x="0.7" y="1" width="4.3" height="14" rx="0.8" fill="#3C8FE0"/><rect x="5.8" y="1" width="4.2" height="14" rx="0.8" fill="#333"/><rect x="11" y="1" width="4.3" height="14" rx="0.8" fill="#3C8FE0"/>
<rect x="2" y="2" width="1.7" height="5.5" fill="#E8F2FC"/><rect x="7.1" y="2" width="1.7" height="5.5" fill="#ddd"/><rect x="12.3" y="2" width="1.7" height="5.5" fill="#E8F2FC"/>
<rect x="2" y="8.5" width="1.7" height="3" fill="#9CC8F0"/><rect x="7.1" y="8.5" width="1.7" height="3" fill="#888"/><rect x="12.3" y="8.5" width="1.7" height="3" fill="#9CC8F0"/></svg><svg style="position:absolute;left:46px;top:599px" width="16" height="16" viewBox="0 0 16 16"><rect x="0.7" y="1" width="4.3" height="14" rx="0.8" fill="#3C8FE0"/><rect x="5.8" y="1" width="4.2" height="14" rx="0.8" fill="#333"/><rect x="11" y="1" width="4.3" height="14" rx="0.8" fill="#3C8FE0"/>
<rect x="2" y="2" width="1.7" height="5.5" fill="#E8F2FC"/><rect x="7.1" y="2" width="1.7" height="5.5" fill="#ddd"/><rect x="12.3" y="2" width="1.7" height="5.5" fill="#E8F2FC"/>
<rect x="2" y="8.5" width="1.7" height="3" fill="#9CC8F0"/><rect x="7.1" y="8.5" width="1.7" height="3" fill="#888"/><rect x="12.3" y="8.5" width="1.7" height="3" fill="#9CC8F0"/></svg><svg style="position:absolute;left:46px;top:694px" width="16" height="16" viewBox="0 0 16 16"><rect x="0.7" y="1" width="4.3" height="14" rx="0.8" fill="#3C8FE0"/><rect x="5.8" y="1" width="4.2" height="14" rx="0.8" fill="#333"/><rect x="11" y="1" width="4.3" height="14" rx="0.8" fill="#3C8FE0"/>
<rect x="2" y="2" width="1.7" height="5.5" fill="#E8F2FC"/><rect x="7.1" y="2" width="1.7" height="5.5" fill="#ddd"/><rect x="12.3" y="2" width="1.7" height="5.5" fill="#E8F2FC"/>
<rect x="2" y="8.5" width="1.7" height="3" fill="#9CC8F0"/><rect x="7.1" y="8.5" width="1.7" height="3" fill="#888"/><rect x="12.3" y="8.5" width="1.7" height="3" fill="#9CC8F0"/></svg><svg style="position:absolute;left:64px;top:909px" width="16" height="16" viewBox="0 0 16 16"><rect x="0.7" y="1" width="4.3" height="14" rx="0.8" fill="#3C8FE0"/><rect x="5.8" y="1" width="4.2" height="14" rx="0.8" fill="#333"/><rect x="11" y="1" width="4.3" height="14" rx="0.8" fill="#3C8FE0"/>
<rect x="2" y="2" width="1.7" height="5.5" fill="#E8F2FC"/><rect x="7.1" y="2" width="1.7" height="5.5" fill="#ddd"/><rect x="12.3" y="2" width="1.7" height="5.5" fill="#E8F2FC"/>
<rect x="2" y="8.5" width="1.7" height="3" fill="#9CC8F0"/><rect x="7.1" y="8.5" width="1.7" height="3" fill="#888"/><rect x="12.3" y="8.5" width="1.7" height="3" fill="#9CC8F0"/></svg><svg style="position:absolute;left:64px;top:929px" width="16" height="16" viewBox="0 0 16 16"><rect x="0.7" y="1" width="4.3" height="14" rx="0.8" fill="#3C8FE0"/><rect x="5.8" y="1" width="4.2" height="14" rx="0.8" fill="#333"/><rect x="11" y="1" width="4.3" height="14" rx="0.8" fill="#3C8FE0"/>
<rect x="2" y="2" width="1.7" height="5.5" fill="#E8F2FC"/><rect x="7.1" y="2" width="1.7" height="5.5" fill="#ddd"/><rect x="12.3" y="2" width="1.7" height="5.5" fill="#E8F2FC"/>
<rect x="2" y="8.5" width="1.7" height="3" fill="#9CC8F0"/><rect x="7.1" y="8.5" width="1.7" height="3" fill="#888"/><rect x="12.3" y="8.5" width="1.7" height="3" fill="#9CC8F0"/></svg><svg style="position:absolute;left:64px;top:949px" width="16" height="16" viewBox="0 0 16 16"><rect x="0.7" y="1" width="4.3" height="14" rx="0.8" fill="#3C8FE0"/><rect x="5.8" y="1" width="4.2" height="14" rx="0.8" fill="#333"/><rect x="11" y="1" width="4.3" height="14" rx="0.8" fill="#3C8FE0"/>
<rect x="2" y="2" width="1.7" height="5.5" fill="#E8F2FC"/><rect x="7.1" y="2" width="1.7" height="5.5" fill="#ddd"/><rect x="12.3" y="2" width="1.7" height="5.5" fill="#E8F2FC"/>
<rect x="2" y="8.5" width="1.7" height="3" fill="#9CC8F0"/><rect x="7.1" y="8.5" width="1.7" height="3" fill="#888"/><rect x="12.3" y="8.5" width="1.7" height="3" fill="#9CC8F0"/></svg><svg style="position:absolute;left:64px;top:969px" width="16" height="16" viewBox="0 0 16 16"><rect x="0.7" y="1" width="4.3" height="14" rx="0.8" fill="#3C8FE0"/><rect x="5.8" y="1" width="4.2" height="14" rx="0.8" fill="#333"/><rect x="11" y="1" width="4.3" height="14" rx="0.8" fill="#3C8FE0"/>
<rect x="2" y="2" width="1.7" height="5.5" fill="#E8F2FC"/><rect x="7.1" y="2" width="1.7" height="5.5" fill="#ddd"/><rect x="12.3" y="2" width="1.7" height="5.5" fill="#E8F2FC"/>
<rect x="2" y="8.5" width="1.7" height="3" fill="#9CC8F0"/><rect x="7.1" y="8.5" width="1.7" height="3" fill="#888"/><rect x="12.3" y="8.5" width="1.7" height="3" fill="#9CC8F0"/></svg><svg style="position:absolute;left:244px;top:994px" width="18" height="18" viewBox="0 0 18 18"><circle cx="8" cy="7.5" r="3.2" fill="none" stroke="#111" stroke-width="1.6"/><path d="M10.3,9.8 L13,12.5" stroke="#111" stroke-width="1.9"/></svg><svg style="position:absolute;left:6px;top:1019px" width="20" height="20" viewBox="0 0 20 20"><ellipse cx="8" cy="4" rx="5" ry="2" fill="#F5A04A"/><path d="M3,4.5 V7 Q8,9.5 13,7 V4.5 Q8,7 3,4.5 Z" fill="#F08A28"/>
<path d="M3,8 V10.5 Q8,13 13,10.5 V8 Q8,10.5 3,8 Z" fill="#F08A28"/><path d="M3,11.5 V14 Q8,16.5 13,14 V11.5 Q8,14 3,11.5 Z" fill="#F08A28"/>
<path d="M11,11.5 L11,18.5 L12.8,16.8 L14.4,19.6 L15.6,19 L14.2,16.3 L16.6,16.2 Z" fill="#333" stroke="#fff" stroke-width="0.5"/></svg><svg style="position:absolute;left:164px;top:1019px" width="18" height="20" viewBox="0 0 18 20"><circle cx="8.8" cy="6" r="3.2" fill="#2A7DD1"/><path d="M2.6,17.5 Q2.8,10.6 8.8,10.4 Q14.8,10.6 15,17.5 Z" fill="#2A7DD1"/></svg><svg style="position:absolute;left:441px;top:280px" width="18" height="18" viewBox="0 0 18 18"><circle cx="9" cy="9" r="6.3" fill="none" stroke="#3A6EE8" stroke-width="1.3"/><path d="M7.3,5.8 L11.8,9 L7.3,12.2 Z" fill="#3A6EE8"/></svg><svg style="position:absolute;left:769px;top:280px" width="18" height="18" viewBox="0 0 18 18"><circle cx="9" cy="9" r="6.3" fill="none" stroke="#3A6EE8" stroke-width="1.3"/><path d="M7.3,5.8 L11.8,9 L7.3,12.2 Z" fill="#3A6EE8"/></svg><svg style="position:absolute;left:1097px;top:280px" width="18" height="18" viewBox="0 0 18 18"><circle cx="9" cy="9" r="6.3" fill="none" stroke="#3A6EE8" stroke-width="1.3"/><path d="M7.3,5.8 L11.8,9 L7.3,12.2 Z" fill="#3A6EE8"/></svg><svg style="position:absolute;left:542px;top:297px" width="18" height="18" viewBox="0 0 18 18"><circle cx="9" cy="9" r="6.3" fill="none" stroke="#3A6EE8" stroke-width="1.3"/><path d="M5.8,7.8 L9,11 L12.2,7.8" stroke="#3A6EE8" stroke-width="1.4" fill="none"/></svg><svg style="position:absolute;left:870px;top:297px" width="18" height="18" viewBox="0 0 18 18"><circle cx="9" cy="9" r="6.3" fill="none" stroke="#3A6EE8" stroke-width="1.3"/><path d="M5.8,7.8 L9,11 L12.2,7.8" stroke="#3A6EE8" stroke-width="1.4" fill="none"/></svg><svg style="position:absolute;left:563px;top:297px" width="18" height="18" viewBox="0 0 18 18"><circle cx="9" cy="9" r="6.3" fill="none" stroke="#3A6EE8" stroke-width="1.3"/><path d="M10.2,5.8 L7,9 L10.2,12.2" stroke="#3A6EE8" stroke-width="1.4" fill="none"/></svg><svg style="position:absolute;left:580px;top:297px" width="18" height="18" viewBox="0 0 18 18"><circle cx="9" cy="9" r="6.3" fill="none" stroke="#8E8E8E" stroke-width="1.3"/><path d="M7.8,5.8 L11,9 L7.8,12.2" stroke="#8E8E8E" stroke-width="1.4" fill="none"/></svg><svg style="position:absolute;left:891px;top:297px" width="18" height="18" viewBox="0 0 18 18"><circle cx="9" cy="9" r="6.3" fill="none" stroke="#3A6EE8" stroke-width="1.3"/><path d="M10.2,5.8 L7,9 L10.2,12.2" stroke="#3A6EE8" stroke-width="1.4" fill="none"/></svg><svg style="position:absolute;left:908px;top:297px" width="18" height="18" viewBox="0 0 18 18"><circle cx="9" cy="9" r="6.3" fill="none" stroke="#8E8E8E" stroke-width="1.3"/><path d="M7.8,5.8 L11,9 L7.8,12.2" stroke="#8E8E8E" stroke-width="1.4" fill="none"/></svg><svg style="position:absolute;left:1219px;top:297px" width="18" height="18" viewBox="0 0 18 18"><circle cx="9" cy="9" r="6.3" fill="none" stroke="#3A6EE8" stroke-width="1.3"/><path d="M10.2,5.8 L7,9 L10.2,12.2" stroke="#3A6EE8" stroke-width="1.4" fill="none"/></svg><svg style="position:absolute;left:1236px;top:297px" width="18" height="18" viewBox="0 0 18 18"><circle cx="9" cy="9" r="6.3" fill="none" stroke="#8E8E8E" stroke-width="1.3"/><path d="M7.8,5.8 L11,9 L7.8,12.2" stroke="#8E8E8E" stroke-width="1.4" fill="none"/></svg><svg style="position:absolute;left:1855.8px;top:297px" width="18" height="18" viewBox="0 0 18 18"><circle cx="9" cy="9" r="6.3" fill="none" stroke="#3A6EE8" stroke-width="1.3"/><path d="M5.8,7.8 L9,11 L12.2,7.8" stroke="#3A6EE8" stroke-width="1.4" fill="none"/></svg><svg style="position:absolute;left:1876.2px;top:297px" width="18" height="18" viewBox="0 0 18 18"><circle cx="9" cy="9" r="6.3" fill="none" stroke="#3A6EE8" stroke-width="1.3"/><path d="M10.2,5.8 L7,9 L10.2,12.2" stroke="#3A6EE8" stroke-width="1.4" fill="none"/></svg><svg style="position:absolute;left:1893.5px;top:297px" width="18" height="18" viewBox="0 0 18 18"><circle cx="9" cy="9" r="6.3" fill="none" stroke="#8E8E8E" stroke-width="1.3"/><path d="M7.8,5.8 L11,9 L7.8,12.2" stroke="#8E8E8E" stroke-width="1.4" fill="none"/></svg><svg style="position:absolute;left:847.8px;top:347px" width="16" height="16" viewBox="0 0 16 16"><circle cx="8" cy="8" r="5.6" fill="none" stroke="#444" stroke-width="1.2"/><rect x="7.4" y="4.6" width="1.3" height="1.3" fill="#444"/><rect x="7.4" y="6.8" width="1.3" height="4.6" fill="#444"/></svg><svg style="position:absolute;left:1147px;top:347px" width="16" height="16" viewBox="0 0 16 16"><circle cx="8" cy="8" r="5.6" fill="none" stroke="#444" stroke-width="1.2"/><rect x="7.4" y="4.6" width="1.3" height="1.3" fill="#444"/><rect x="7.4" y="6.8" width="1.3" height="4.6" fill="#444"/></svg>
<div style="position:absolute;left:0;top:0;width:1920px;height:1043px;will-change:transform">
<div class="t" style="left:856.00px;top:13.28px;font-size:11.5px;color:#fff;letter-spacing:-0.019px;transform:scaleY(1.05);transform-origin:0 9.72px;">Verdecenter, Lda. - WISEDAT Comercial</div><div class="t" style="left:16.70px;top:45.17px;font-size:14px;color:#2b2b2b;letter-spacing:-0.528px;transform:scaleY(1.1);transform-origin:0 11.83px;">SISTEMA</div><div class="t" style="left:108.00px;top:45.17px;font-size:14px;color:#2b2b2b;letter-spacing:-0.992px;transform:scaleY(1.1);transform-origin:0 11.83px;">GERAL</div><div class="t" style="left:186.70px;top:45.17px;font-size:14px;color:#2b2b2b;letter-spacing:-0.353px;transform:scaleY(1.1);transform-origin:0 11.83px;">CLIENTES/VENDAS</div><div class="t" style="left:346.00px;top:45.17px;font-size:14px;color:#2b2b2b;letter-spacing:-0.506px;transform:scaleY(1.1);transform-origin:0 11.83px;">FORNECEDORES/COMPRAS</div><div class="t" style="left:564.00px;top:45.17px;font-size:14px;color:#2b2b2b;letter-spacing:-0.142px;transform:scaleY(1.1);transform-origin:0 11.83px;">INVENTÁRIO</div><div class="t" style="left:682.70px;top:45.17px;font-size:14px;color:#2b2b2b;letter-spacing:-0.491px;transform:scaleY(1.1);transform-origin:0 11.83px;">TESOURARIA</div><div class="t" style="left:8.90px;top:112.28px;font-size:11.5px;color:#333;letter-spacing:-0.551px;transform:scaleY(1.06);transform-origin:0 9.72px;">SAF-T (PT)</div><div class="t" style="left:71.70px;top:112.28px;font-size:11.5px;color:#333;letter-spacing:0.064px;transform:scaleY(1.06);transform-origin:0 9.72px;">Circulação</div><div class="t" style="left:135.40px;top:112.28px;font-size:11.5px;color:#333;letter-spacing:0.176px;transform:scaleY(1.06);transform-origin:0 9.72px;">Inventário</div><div class="t" style="left:205.60px;top:112.28px;font-size:11.5px;color:#333;letter-spacing:0.297px;transform:scaleY(1.06);transform-origin:0 9.72px;">Novo Item</div><div class="t" style="left:269.60px;top:112.28px;font-size:11.5px;color:#333;letter-spacing:0.372px;transform:scaleY(1.06);transform-origin:0 9.72px;">Novo Documento</div><div class="t" style="left:372.50px;top:112.28px;font-size:11.5px;color:#333;letter-spacing:0.236px;transform:scaleY(1.06);transform-origin:0 9.72px;">Novo E-mail</div><div class="t" style="left:454.90px;top:112.28px;font-size:11.5px;color:#333;transform:scaleY(1.06);transform-origin:0 9.72px;">Visão Global</div><div class="t" style="left:528.00px;top:112.28px;font-size:11.5px;color:#333;letter-spacing:0.281px;transform:scaleY(1.06);transform-origin:0 9.72px;">Vendas &amp;</div><div class="t" style="left:532.50px;top:127.28px;font-size:11.5px;color:#333;letter-spacing:-0.066px;transform:scaleY(1.06);transform-origin:0 9.72px;">Clientes</div><div class="t" style="left:592.30px;top:112.28px;font-size:11.5px;color:#333;letter-spacing:0.434px;transform:scaleY(1.06);transform-origin:0 9.72px;">Compras &amp;</div><div class="t" style="left:587.30px;top:127.28px;font-size:11.5px;color:#333;letter-spacing:-0.088px;transform:scaleY(1.06);transform-origin:0 9.72px;">Fornecedores</div><div class="t" style="left:666.25px;top:112.28px;font-size:11.5px;color:#333;letter-spacing:0.165px;transform:scaleY(1.06);transform-origin:0 9.72px;">Inventário</div><div class="t" style="left:727.50px;top:112.28px;font-size:11.5px;color:#333;letter-spacing:0.015px;transform:scaleY(1.06);transform-origin:0 9.72px;">Contas correntes</div><div class="t" style="left:751.50px;top:127.28px;font-size:11.5px;color:#333;letter-spacing:-0.095px;transform:scaleY(1.06);transform-origin:0 9.72px;">Clientes</div><div class="t" style="left:824.60px;top:112.28px;font-size:11.5px;color:#333;transform:scaleY(1.06);transform-origin:0 9.72px;">Contas correntes</div><div class="t" style="left:833.00px;top:127.28px;font-size:11.5px;color:#333;letter-spacing:-0.020px;transform:scaleY(1.06);transform-origin:0 9.72px;">Fornecedores</div><div class="t" style="left:928.50px;top:112.28px;font-size:11.5px;color:#333;letter-spacing:-0.188px;transform:scaleY(1.06);transform-origin:0 9.72px;">Contas</div><div class="t" style="left:922.50px;top:127.28px;font-size:11.5px;color:#333;letter-spacing:-0.293px;transform:scaleY(1.06);transform-origin:0 9.72px;">Bancárias</div><div class="t" style="left:980.30px;top:112.28px;font-size:11.5px;color:#333;letter-spacing:0.038px;transform:scaleY(1.06);transform-origin:0 9.72px;">Pontos de</div><div class="t" style="left:990.00px;top:127.28px;font-size:11.5px;color:#333;letter-spacing:-0.156px;transform:scaleY(1.06);transform-origin:0 9.72px;">Venda</div><div class="t" style="left:1050.20px;top:112.28px;font-size:11.5px;color:#333;letter-spacing:0.094px;transform:scaleY(1.06);transform-origin:0 9.72px;">Atualizar</div><div class="t" style="left:1124.40px;top:112.28px;font-size:11.5px;color:#333;letter-spacing:-0.012px;transform:scaleY(1.06);transform-origin:0 9.72px;">Favoritos</div><div class="t" style="left:1211.70px;top:112.28px;font-size:11.5px;color:#333;letter-spacing:0.031px;transform:scaleY(1.06);transform-origin:0 9.72px;">Calendário</div><div class="t" style="left:77.60px;top:151.58px;font-size:11.5px;color:#333;letter-spacing:-0.075px;transform:scaleY(1.08);transform-origin:0 9.72px;">E-fatura</div><div class="t" style="left:307.50px;top:151.58px;font-size:11.5px;color:#333;letter-spacing:0.414px;transform:scaleY(1.08);transform-origin:0 9.72px;">Novo</div><div class="t" style="left:717.75px;top:151.58px;font-size:11.5px;color:#333;letter-spacing:0.093px;transform:scaleY(1.08);transform-origin:0 9.72px;">Painel de informações</div><div class="t" style="left:1119.50px;top:151.58px;font-size:11.5px;color:#333;letter-spacing:-0.061px;transform:scaleY(1.08);transform-origin:0 9.72px;">Exploração</div><div class="t" style="left:1207.50px;top:151.58px;font-size:11.5px;color:#333;letter-spacing:-0.139px;transform:scaleY(1.08);transform-origin:0 9.72px;">Ferramentas</div><div class="t" style="left:32.30px;top:174.28px;font-size:11.5px;color:#fff;font-weight:700;letter-spacing:-0.190px;transform:scaleY(1.05);transform-origin:0 9.72px;">Comunicação à AT</div><div class="t" style="left:141.25px;top:174.28px;font-size:11.5px;color:#fff;letter-spacing:0.137px;transform:scaleY(1.06);transform-origin:0 9.72px;">Poderá optar por comunicar as faturas, documentos de conferência e recibos de caixa através do ficheiro SAF-T ou automáticamente por Webservice.</div><div class="t" style="left:936.00px;top:174.28px;font-size:11.5px;color:#fff;letter-spacing:0.122px;transform:scaleY(1.06);transform-origin:0 9.72px;">Escolher método</div><div class="t" style="left:1033.00px;top:174.28px;font-size:11.5px;color:#fff;letter-spacing:0.062px;transform:scaleY(1.06);transform-origin:0 9.72px;">Não voltar a avisar</div><div class="t" style="left:47.80px;top:226.86px;font-size:12px;color:#222;font-weight:700;letter-spacing:-0.300px;">Painel de informações</div><div class="t" style="left:47.80px;top:261.86px;font-size:12px;color:#222;font-weight:700;letter-spacing:-0.645px;">Exploração</div><div class="t" style="left:47.80px;top:296.86px;font-size:12px;color:#222;font-weight:700;letter-spacing:-0.632px;">Emails enviados</div><div class="t" style="left:47.70px;top:331.86px;font-size:12px;color:#222;font-weight:700;letter-spacing:-0.299px;">Gestão de Projetos</div><div class="t" style="left:66.10px;top:352.78px;font-size:11.5px;color:#222;letter-spacing:0.115px;transform:scaleY(1.08);transform-origin:0 9.72px;">Obras/Projetos</div><div class="t" style="left:47.70px;top:386.86px;font-size:12px;color:#222;font-weight:700;letter-spacing:-0.268px;">Clientes/Vendas</div><div class="t" style="left:66.10px;top:407.78px;font-size:11.5px;color:#222;letter-spacing:0.049px;transform:scaleY(1.08);transform-origin:0 9.72px;">Pontos de Venda</div><div class="t" style="left:66.10px;top:427.78px;font-size:11.5px;color:#222;letter-spacing:-0.038px;transform:scaleY(1.08);transform-origin:0 9.72px;">Clientes</div><div class="t" style="left:66.10px;top:447.78px;font-size:11.5px;color:#222;letter-spacing:0.124px;transform:scaleY(1.08);transform-origin:0 9.72px;">Documentos de Clientes</div><div class="t" style="left:66.10px;top:467.78px;font-size:11.5px;color:#222;letter-spacing:-0.101px;transform:scaleY(1.08);transform-origin:0 9.72px;">Avenças</div><div class="t" style="left:66.10px;top:487.78px;font-size:11.5px;color:#222;letter-spacing:0.012px;transform:scaleY(1.08);transform-origin:0 9.72px;">Vendedores</div><div class="t" style="left:66.10px;top:507.78px;font-size:11.5px;color:#222;letter-spacing:-0.023px;transform:scaleY(1.08);transform-origin:0 9.72px;">Outras Listagens</div><div class="t" style="left:66.10px;top:527.78px;font-size:11.5px;color:#222;letter-spacing:-0.046px;transform:scaleY(1.08);transform-origin:0 9.72px;">Outras tabelas</div><div class="t" style="left:47.70px;top:561.86px;font-size:12px;color:#222;font-weight:700;letter-spacing:-0.327px;">Fornecedores/Compras</div><div class="t" style="left:66.10px;top:582.78px;font-size:11.5px;color:#222;letter-spacing:-0.097px;transform:scaleY(1.08);transform-origin:0 9.72px;">Fornecedores</div><div class="t" style="left:66.10px;top:602.78px;font-size:11.5px;color:#222;letter-spacing:0.096px;transform:scaleY(1.08);transform-origin:0 9.72px;">Documentos de Fornecedores</div><div class="t" style="left:66.10px;top:622.78px;font-size:11.5px;color:#222;letter-spacing:-0.046px;transform:scaleY(1.08);transform-origin:0 9.72px;">Outras tabelas</div><div class="t" style="left:47.70px;top:656.86px;font-size:12px;color:#222;font-weight:700;">Inventário</div><div class="t" style="left:66.10px;top:677.78px;font-size:11.5px;color:#222;letter-spacing:0.251px;transform:scaleY(1.08);transform-origin:0 9.72px;">Artigos</div><div class="t" style="left:66.10px;top:697.78px;font-size:11.5px;color:#222;letter-spacing:0.237px;transform:scaleY(1.08);transform-origin:0 9.72px;">Movimentos de Stock</div><div class="t" style="left:66.10px;top:717.78px;font-size:11.5px;color:#222;letter-spacing:0.116px;transform:scaleY(1.08);transform-origin:0 9.72px;">Promoções</div><div class="t" style="left:66.10px;top:737.78px;font-size:11.5px;color:#222;letter-spacing:-0.054px;transform:scaleY(1.08);transform-origin:0 9.72px;">Armazéns</div><div class="t" style="left:66.10px;top:757.78px;font-size:11.5px;color:#222;letter-spacing:-0.023px;transform:scaleY(1.08);transform-origin:0 9.72px;">Outras Listagens</div><div class="t" style="left:66.10px;top:777.78px;font-size:11.5px;color:#222;letter-spacing:-0.032px;transform:scaleY(1.08);transform-origin:0 9.72px;">Localizações de armazém</div><div class="t" style="left:66.10px;top:797.78px;font-size:11.5px;color:#222;letter-spacing:-0.144px;transform:scaleY(1.08);transform-origin:0 9.72px;">Localizações</div><div class="t" style="left:66.10px;top:817.78px;font-size:11.5px;color:#222;letter-spacing:0.143px;transform:scaleY(1.08);transform-origin:0 9.72px;">Estrutura Artigos</div><div class="t" style="left:66.10px;top:837.78px;font-size:11.5px;color:#222;letter-spacing:-0.046px;transform:scaleY(1.08);transform-origin:0 9.72px;">Outras tabelas</div><div class="t" style="left:47.70px;top:871.86px;font-size:12px;color:#222;font-weight:700;letter-spacing:-0.019px;">Tesouraria</div><div class="t" style="left:66.40px;top:892.78px;font-size:11.5px;color:#222;transform:scaleY(1.08);transform-origin:0 9.72px;">Contas Correntes</div><div class="t" style="left:84.10px;top:912.78px;font-size:11.5px;color:#222;letter-spacing:-0.125px;transform:scaleY(1.08);transform-origin:0 9.72px;">Pendentes</div><div class="t" style="left:84.10px;top:932.78px;font-size:11.5px;color:#222;letter-spacing:0.111px;transform:scaleY(1.08);transform-origin:0 9.72px;">Liquidações</div><div class="t" style="left:84.10px;top:952.78px;font-size:11.5px;color:#222;letter-spacing:0.290px;transform:scaleY(1.08);transform-origin:0 9.72px;">Adiantamentos</div><div class="t" style="left:84.10px;top:972.78px;font-size:11.5px;color:#222;letter-spacing:0.105px;transform:scaleY(1.08);transform-origin:0 9.72px;">Outros pendentes</div><div class="t" style="left:29.20px;top:1024.28px;font-size:11.5px;color:#222;transform:scaleY(1.06);transform-origin:0 9.72px;">001 - Verdecenter, Lda.</div><div class="t" style="left:186.00px;top:1024.28px;font-size:11.5px;color:#222;letter-spacing:0.494px;transform:scaleY(1.06);transform-origin:0 9.72px;">Admin - Administrador</div><div class="t" style="left:1699.00px;top:1024.70px;font-size:11px;color:#222;letter-spacing:-0.010px;transform:scaleY(1.06);transform-origin:0 9.29px;">LICENÇA PARA FINS DEMONSTRATIVOS</div><div class="t" style="left:280.50px;top:215.92px;font-size:14.3px;color:#3561A8;transform:scaleY(1.12);transform-origin:0 12.08px;">INDICADORES DE DESEMPENHO</div><div class="t" style="left:290.20px;top:239.30px;font-size:10.3px;color:#6E6E6E;">VALOR DE VENDAS 2025</div><div class="t" style="left:292.80px;top:257.60px;font-size:20px;color:#3a3a3a;font-weight:700;letter-spacing:0.578px;transform:scaleY(1.05);transform-origin:0 16.90px;">0,00 €</div><div class="t" style="left:291.60px;top:283.55px;font-size:14.5px;color:#777;letter-spacing:-0.566px;">0,00 €</div><div class="t" style="left:290.20px;top:301.67px;font-size:10.8px;color:#6E6E6E;letter-spacing:-0.273px;">vs VALOR DE VENDAS 2024</div><div class="t" style="left:618.20px;top:239.30px;font-size:10.3px;color:#6E6E6E;letter-spacing:-0.119px;">VALOR DE VENDAS (ESTE MÊS 2025)</div><div class="t" style="left:620.80px;top:257.60px;font-size:20px;color:#3a3a3a;font-weight:700;letter-spacing:0.578px;transform:scaleY(1.05);transform-origin:0 16.90px;">0,00 €</div><div class="t" style="left:619.60px;top:283.55px;font-size:14.5px;color:#777;letter-spacing:-0.566px;">0,00 €</div><div class="t" style="left:618.20px;top:301.67px;font-size:10.8px;color:#6E6E6E;letter-spacing:-0.353px;">vs VALOR DE VENDAS (MÊS ANTERIOR)</div><div class="t" style="left:946.20px;top:239.30px;font-size:10.3px;color:#6E6E6E;">PRAZO MÉDIO RECEBIMENTO 2025</div><div class="t" style="left:948.80px;top:257.60px;font-size:20px;color:#3a3a3a;font-weight:700;letter-spacing:0.110px;transform:scaleY(1.05);transform-origin:0 16.90px;">0 dia(s)</div><div class="t" style="left:947.60px;top:283.55px;font-size:14.5px;color:#777;letter-spacing:-0.051px;">0 dia(s)</div><div class="t" style="left:946.20px;top:301.67px;font-size:10.8px;color:#6E6E6E;letter-spacing:0.037px;">vs ANO 2024</div><div class="t" style="left:1274.20px;top:239.30px;font-size:10.3px;color:#6E6E6E;letter-spacing:-0.321px;">TOTAL A RECEBER</div><div class="t" style="left:1276.80px;top:257.60px;font-size:20px;color:#3a3a3a;font-weight:700;letter-spacing:0.578px;transform:scaleY(1.05);transform-origin:0 16.90px;">0,00 €</div><div class="t" style="left:1275.60px;top:283.55px;font-size:14.5px;color:#777;letter-spacing:-0.566px;">0,00 €</div><div class="t" style="left:1274.20px;top:301.67px;font-size:10.8px;color:#6E6E6E;letter-spacing:-0.361px;">vs TOTAL A PAGAR</div><div class="t" style="left:462.80px;top:284.70px;font-size:11px;color:#3A6EE8;">0</div><div class="t" style="left:470.22px;top:284.70px;font-size:11px;color:#3A6EE8;">%</div><div class="t" style="left:790.80px;top:284.70px;font-size:11px;color:#3A6EE8;">0</div><div class="t" style="left:798.22px;top:284.70px;font-size:11px;color:#3A6EE8;">%</div><div class="t" style="left:1118.80px;top:284.70px;font-size:11px;color:#3A6EE8;">0</div><div class="t" style="left:1126.22px;top:284.70px;font-size:11px;color:#3A6EE8;">%</div><div class="t" style="left:1602.70px;top:239.30px;font-size:10.3px;color:#6E6E6E;letter-spacing:-0.056px;">ESTIMATIVA IVA</div><div class="t" style="left:1604.00px;top:257.60px;font-size:20px;color:#111;font-weight:700;letter-spacing:0.578px;transform:scaleY(1.05);transform-origin:0 16.90px;">0,00 €</div><div class="t" style="left:1629.70px;top:285.15px;font-size:10px;color:#555;letter-spacing:-1.409px;">ESTADO:</div><div class="t" style="left:1731.80px;top:284.70px;font-size:11px;color:#555;letter-spacing:0.652px;">0 €</div><div class="t" style="left:1789.60px;top:285.15px;font-size:10px;color:#555;letter-spacing:-1.427px;">DEDUZ:</div><div class="t" style="left:1889.80px;top:284.70px;font-size:11px;color:#555;letter-spacing:0.652px;">0 €</div><div class="t" style="left:1602.70px;top:301.87px;font-size:10.8px;color:#6E6E6E;letter-spacing:-0.180px;">MÊS 5/2025</div><div class="t" style="left:280.40px;top:327.72px;font-size:14.3px;color:#3561A8;letter-spacing:0.026px;transform:scaleY(1.12);transform-origin:0 12.08px;">DEMONSTRAÇÃO DE RESULTADOS</div><div class="t" style="left:294.40px;top:350.93px;font-size:10.5px;color:#6E6E6E;letter-spacing:-0.189px;">RESULTADO LÍQUIDO</div><div class="t" style="left:296.30px;top:366.26px;font-size:16.5px;color:#111;letter-spacing:0.385px;">0,00 €</div><div class="t" style="left:591.40px;top:350.93px;font-size:10.5px;color:#6E6E6E;letter-spacing:-0.873px;">DESPESAS</div><div class="t" style="left:593.30px;top:366.26px;font-size:16.5px;color:#111;letter-spacing:0.385px;">0,00 €</div><div class="t" style="left:889.40px;top:350.93px;font-size:10.5px;color:#6E6E6E;letter-spacing:-0.783px;">RECEITAS</div><div class="t" style="left:891.30px;top:366.26px;font-size:16.5px;color:#111;letter-spacing:0.385px;">0,00 €</div><div class="t" style="left:436.65px;top:651.71px;font-size:11px;color:#111;font-weight:700;">fev</div><div class="t" style="left:563.14px;top:651.71px;font-size:11px;color:#111;font-weight:700;">abr</div><div class="t" style="left:690.55px;top:651.71px;font-size:11px;color:#111;font-weight:700;">jun</div><div class="t" style="left:816.12px;top:651.71px;font-size:11px;color:#111;font-weight:700;">ago</div><div class="t" style="left:944.45px;top:651.71px;font-size:11px;color:#111;font-weight:700;">out</div><div class="t" style="left:1070.93px;top:651.71px;font-size:11px;color:#111;font-weight:700;">dez</div><div class="t" style="left:600.30px;top:686.84px;font-size:11.2px;color:#222;letter-spacing:-0.233px;">Resultados Líquidos</div><div class="t" style="left:737.50px;top:686.84px;font-size:11.2px;color:#222;letter-spacing:-0.564px;">Despesas</div><div class="t" style="left:823.30px;top:686.84px;font-size:11.2px;color:#222;letter-spacing:-0.304px;">Receitas</div><div class="t" style="left:278.50px;top:720.13px;font-size:10.5px;color:#222;letter-spacing:-0.229px;">Ano: 2025 (valores em EUR)</div><div class="t" style="left:1038.70px;top:719.31px;font-size:11px;color:#0000FF;letter-spacing:-0.033px;text-decoration:underline;">Anterior</div><div class="t" style="left:1114.70px;top:719.31px;font-size:11px;color:#333;letter-spacing:-0.491px;">Próximo</div><div class="t" style="left:279.50px;top:744.92px;font-size:14.3px;color:#3561A8;transform:scaleY(1.12);transform-origin:0 12.08px;">TESOURARIA PREVISIONAL</div><div class="t" style="left:460.21px;top:953.41px;font-size:11px;color:#111;font-weight:700;">Anterior</div><div class="t" style="left:610.03px;top:953.41px;font-size:11px;color:#111;font-weight:700;">Próx. semana</div><div class="t" style="left:764.75px;top:953.41px;font-size:11px;color:#111;font-weight:700;">Próximos 30 dias</div><div class="t" style="left:956.79px;top:953.41px;font-size:11px;color:#111;font-weight:700;">Futuro</div><div class="t" style="left:668.00px;top:984.04px;font-size:11.2px;color:#222;letter-spacing:-0.135px;">A Pagar</div><div class="t" style="left:747.20px;top:984.04px;font-size:11.2px;color:#222;letter-spacing:-0.244px;">A Receber</div><div class="t" style="left:1184.10px;top:326.92px;font-size:14.3px;color:#3561A8;letter-spacing:-0.033px;transform:scaleY(1.12);transform-origin:0 12.08px;">DOCUMENTOS CLIENTES</div><div class="t" style="left:1196.60px;top:347.03px;font-size:10.5px;color:#6E6E6E;letter-spacing:-0.314px;">ENCOMENDAS PENDENTES</div><div class="t" style="left:1198.70px;top:367.63px;font-size:17px;color:#2a2a2a;">0</div><div class="t" style="left:1332.70px;top:367.63px;font-size:17px;color:#2a2a2a;letter-spacing:0.047px;">0,00 €</div><div class="t" style="left:1565.50px;top:347.03px;font-size:10.5px;color:#6E6E6E;letter-spacing:-0.184px;">GUIAS A FATURAR</div><div class="t" style="left:1567.00px;top:367.63px;font-size:17px;color:#2a2a2a;">0</div><div class="t" style="left:1701.50px;top:367.63px;font-size:17px;color:#2a2a2a;letter-spacing:0.047px;">0,00 €</div><div class="t" style="left:1194.30px;top:454.13px;font-size:10.5px;color:#6E6E6E;letter-spacing:-0.325px;">ORÇAMENTOS PENDENTES</div><div class="t" style="left:1509.40px;top:404.13px;font-size:10.5px;color:#6E6E6E;letter-spacing:-0.057px;">EM APROVAÇÃO</div><div class="t" style="left:1750.35px;top:404.13px;font-size:10.5px;color:#6E6E6E;letter-spacing:-0.181px;">APROVADOS</div><div class="t" style="left:1497.27px;top:462.63px;font-size:17px;color:#2a2a2a;transform:scaleY(1.07);transform-origin:0 14.37px;">0</div><div class="t" style="left:1610.10px;top:462.63px;font-size:17px;color:#2a2a2a;letter-spacing:0.247px;transform:scaleY(1.07);transform-origin:0 14.37px;">0,00 €</div><div class="t" style="left:1727.27px;top:462.63px;font-size:17px;color:#2a2a2a;transform:scaleY(1.07);transform-origin:0 14.37px;">0</div><div class="t" style="left:1842.50px;top:462.63px;font-size:17px;color:#2a2a2a;letter-spacing:0.247px;transform:scaleY(1.07);transform-origin:0 14.37px;">0,00 €</div><div class="t" style="left:1194.30px;top:585.13px;font-size:10.5px;color:#6E6E6E;letter-spacing:-0.356px;">AVENÇAS A PROCESSAR</div><div class="t" style="left:1493.20px;top:535.13px;font-size:10.5px;color:#6E6E6E;letter-spacing:-0.029px;">ATÉ FINAL DA SEMANA</div><div class="t" style="left:1767.45px;top:535.13px;font-size:10.5px;color:#6E6E6E;letter-spacing:-0.694px;">TOTAL</div><div class="t" style="left:1497.27px;top:593.13px;font-size:17px;color:#2a2a2a;transform:scaleY(1.07);transform-origin:0 14.37px;">0</div><div class="t" style="left:1610.10px;top:593.13px;font-size:17px;color:#2a2a2a;letter-spacing:0.247px;transform:scaleY(1.07);transform-origin:0 14.37px;">0,00 €</div><div class="t" style="left:1727.27px;top:593.13px;font-size:17px;color:#2a2a2a;transform:scaleY(1.07);transform-origin:0 14.37px;">0</div><div class="t" style="left:1842.50px;top:593.13px;font-size:17px;color:#2a2a2a;letter-spacing:0.247px;transform:scaleY(1.07);transform-origin:0 14.37px;">0,00 €</div><div class="t" style="left:1184.10px;top:660.92px;font-size:14.3px;color:#3561A8;letter-spacing:-0.033px;transform:scaleY(1.12);transform-origin:0 12.08px;">DOCUMENTOS FORNECEDORES</div><div class="t" style="left:1196.60px;top:680.83px;font-size:10.5px;color:#6E6E6E;letter-spacing:-0.314px;">ENCOMENDAS PENDENTES</div><div class="t" style="left:1198.70px;top:701.13px;font-size:17px;color:#2a2a2a;">0</div><div class="t" style="left:1332.40px;top:701.13px;font-size:17px;color:#2a2a2a;letter-spacing:0.147px;">0,00 €</div><div class="t" style="left:1184.10px;top:732.92px;font-size:14.3px;color:#3561A8;letter-spacing:-0.150px;transform:scaleY(1.12);transform-origin:0 12.08px;">CONTAS CORRENTES</div><div class="t" style="left:1194.30px;top:813.43px;font-size:10.5px;color:#6E6E6E;letter-spacing:-0.473px;">PENDENTES DE CLIENTES</div><div class="t" style="left:1509.60px;top:760.13px;font-size:10.5px;color:#6E6E6E;letter-spacing:-0.098px;">ATÉ FINAL DO MÊS</div><div class="t" style="left:1773.20px;top:760.13px;font-size:10.5px;color:#6E6E6E;letter-spacing:-0.139px;">TODOS</div><div class="t" style="left:1502.77px;top:819.63px;font-size:17px;color:#2a2a2a;transform:scaleY(1.07);transform-origin:0 14.37px;">0</div><div class="t" style="left:1617.80px;top:819.63px;font-size:17px;color:#2a2a2a;letter-spacing:0.247px;transform:scaleY(1.07);transform-origin:0 14.37px;">0,00 €</div><div class="t" style="left:1736.77px;top:819.63px;font-size:17px;color:#2a2a2a;transform:scaleY(1.07);transform-origin:0 14.37px;">0</div><div class="t" style="left:1852.90px;top:819.63px;font-size:17px;color:#2a2a2a;letter-spacing:0.247px;transform:scaleY(1.07);transform-origin:0 14.37px;">0,00 €</div><div class="t" style="left:1194.30px;top:944.43px;font-size:10.5px;color:#6E6E6E;letter-spacing:-0.387px;">PENDENTES DE FORNECEDORES</div><div class="t" style="left:1509.60px;top:891.13px;font-size:10.5px;color:#6E6E6E;letter-spacing:-0.098px;">ATÉ FINAL DO MÊS</div><div class="t" style="left:1773.20px;top:891.13px;font-size:10.5px;color:#6E6E6E;letter-spacing:-0.139px;">TODOS</div><div class="t" style="left:1502.77px;top:951.63px;font-size:17px;color:#2a2a2a;transform:scaleY(1.07);transform-origin:0 14.37px;">0</div><div class="t" style="left:1617.80px;top:951.63px;font-size:17px;color:#2a2a2a;letter-spacing:0.247px;transform:scaleY(1.07);transform-origin:0 14.37px;">0,00 €</div><div class="t" style="left:1736.77px;top:951.63px;font-size:17px;color:#2a2a2a;transform:scaleY(1.07);transform-origin:0 14.37px;">0</div><div class="t" style="left:1852.90px;top:951.63px;font-size:17px;color:#2a2a2a;letter-spacing:0.247px;transform:scaleY(1.07);transform-origin:0 14.37px;">0,00 €</div>
</div>
</body></html>
